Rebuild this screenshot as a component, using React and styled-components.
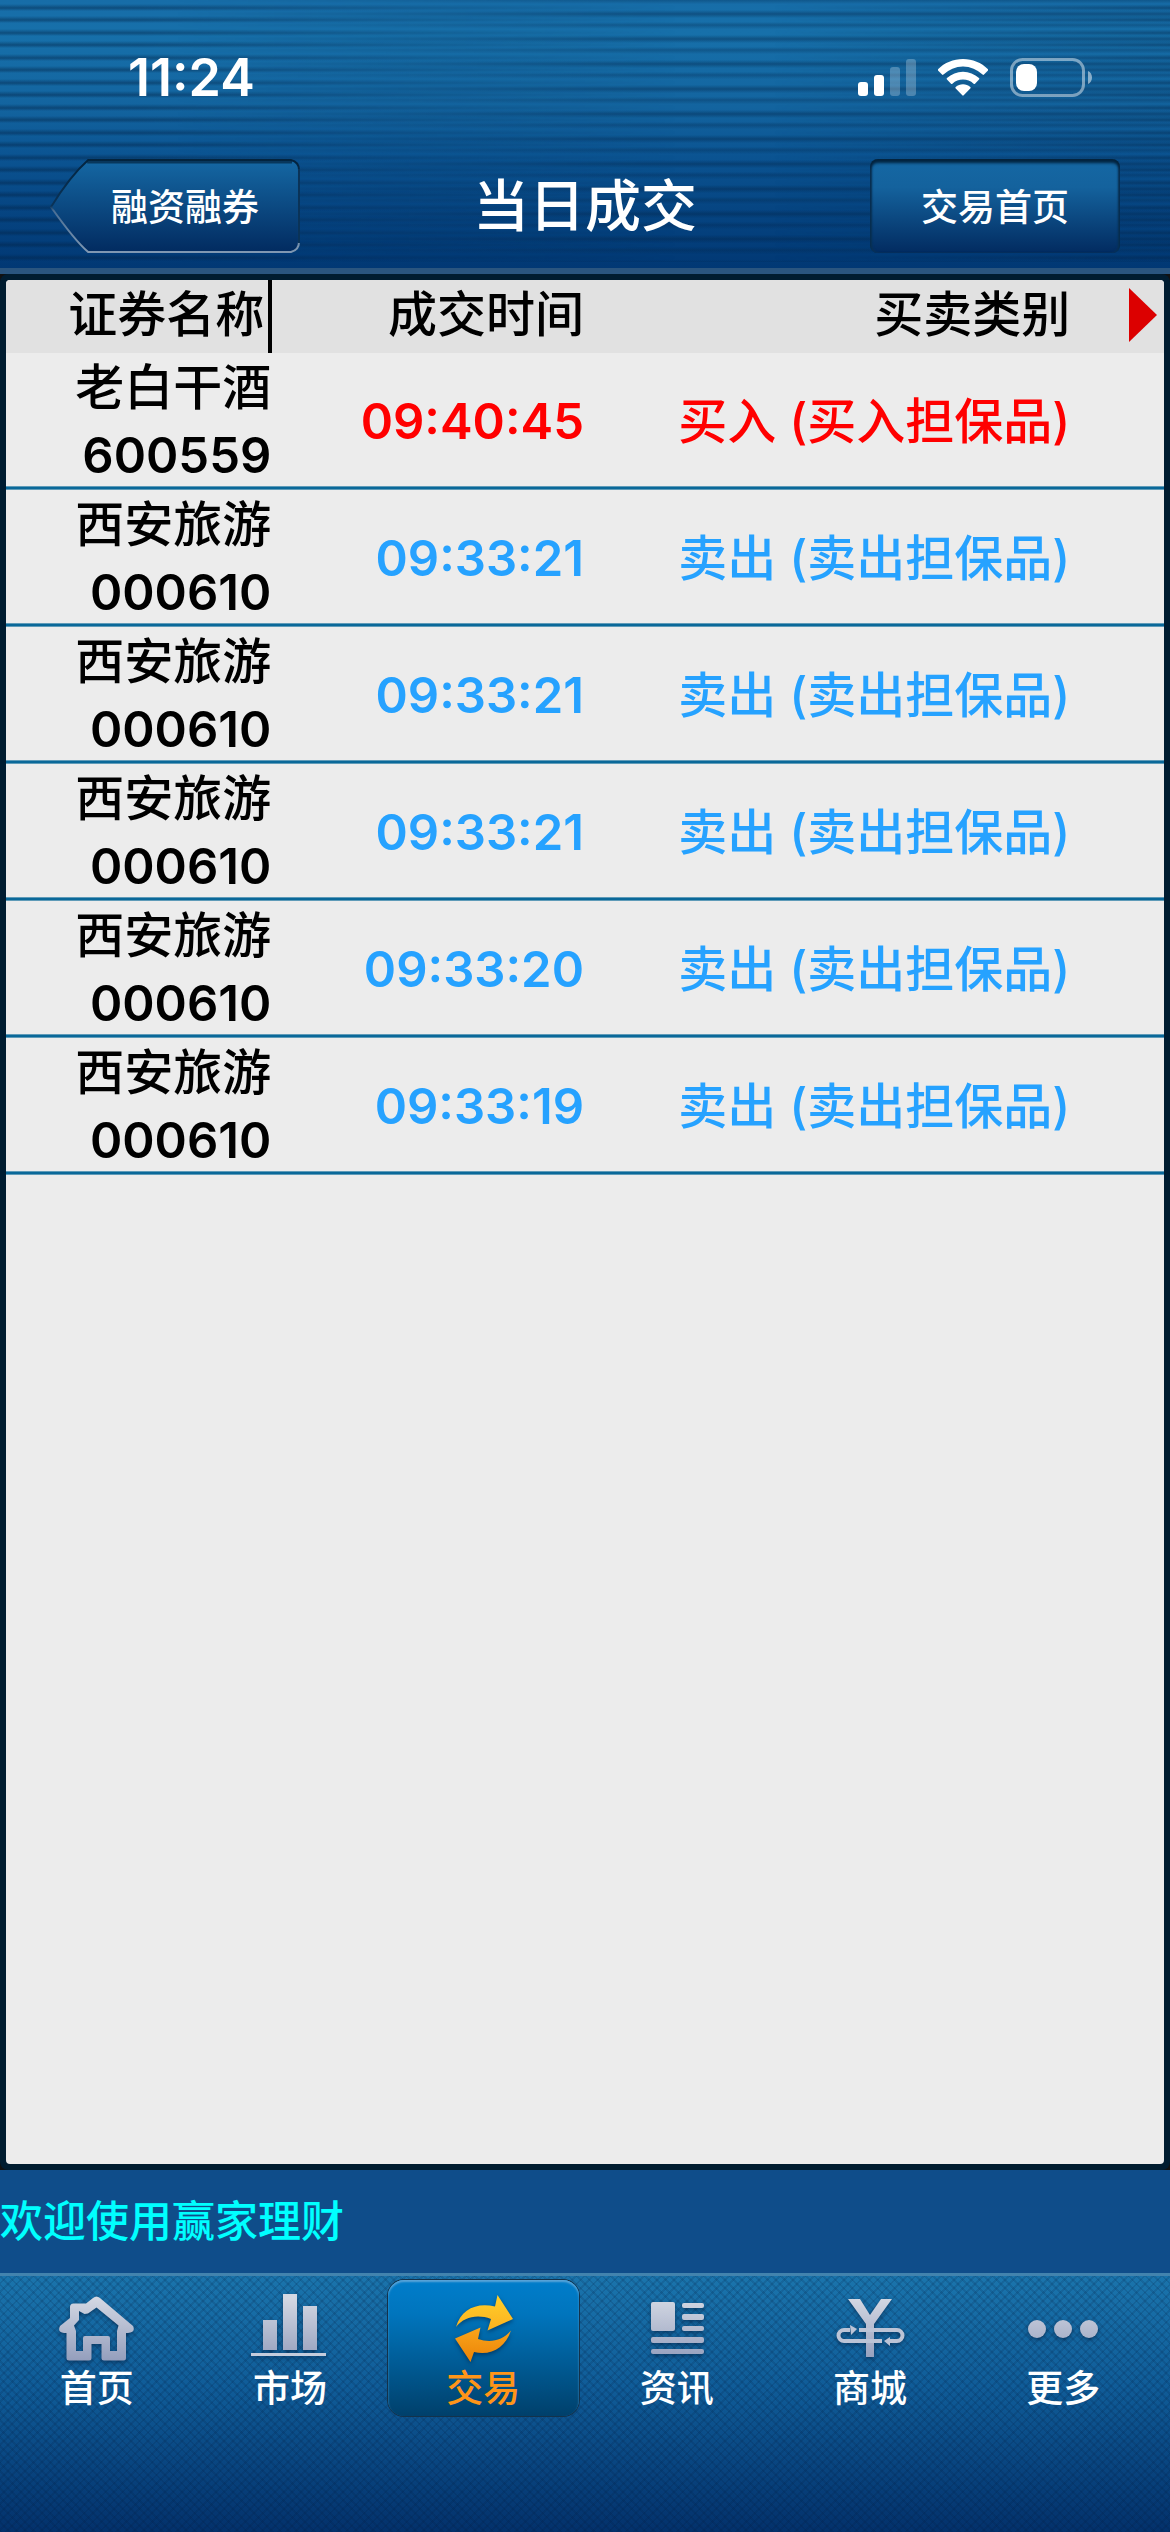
import React from "react";
import styled, { createGlobalStyle, css } from "styled-components";

const trades = [
  { name: "老白干酒", code: "600559", time: "09:40:45", kind: "买入 (买入担保品)", side: "buy" },
  { name: "西安旅游", code: "000610", time: "09:33:21", kind: "卖出 (卖出担保品)", side: "sell" },
  { name: "西安旅游", code: "000610", time: "09:33:21", kind: "卖出 (卖出担保品)", side: "sell" },
  { name: "西安旅游", code: "000610", time: "09:33:21", kind: "卖出 (卖出担保品)", side: "sell" },
  { name: "西安旅游", code: "000610", time: "09:33:20", kind: "卖出 (卖出担保品)", side: "sell" },
  { name: "西安旅游", code: "000610", time: "09:33:19", kind: "卖出 (卖出担保品)", side: "sell" },
];

const SignalIcon = () => (
  <svg width="58" height="38" viewBox="0 0 58 38" fill="#fff">
    <rect x="0" y="23" width="10" height="14" rx="3" />
    <rect x="16" y="16" width="10" height="21" rx="3" />
    <rect x="32" y="8" width="10" height="29" rx="3" opacity="0.25" />
    <rect x="48" y="0" width="10" height="37" rx="3" opacity="0.25" />
  </svg>
);

const WifiIcon = () => (
  <svg width="50" height="38" viewBox="0 0 50 38" fill="#fff">
    <path d="M25 0C34.500 0 43.500 3.700 50 10.200a1 1 0 0 1 0 1.400l-4 4a1 1 0 0 1-1.400 0a28 28 0 0 0-39.200 0a1 1 0 0 1-1.400 0l-4-4a1 1 0 0 1 0-1.400C6.500 3.700 15.500 0 25 0z" />
    <path d="M25 12.700c6 0 11.600 2.300 16 6.300a1 1 0 0 1 0 1.500l-4 4.200a1 1 0 0 1-1.400 0a15.500 15.500 0 0 0-21.200 0a1 1 0 0 1-1.400 0l-4-4.200a1 1 0 0 1 0-1.500c4.400-4 10-6.300 16-6.300z" />
    <path d="M25 25.300c2.700 0 5.200.9 7.300 2.600a1 1 0 0 1 0 1.500l-6.600 6.900a1 1 0 0 1-1.400 0l-6.600-6.900a1 1 0 0 1 0-1.500c2.100-1.700 4.600-2.600 7.300-2.600z" />
  </svg>
);

const BatteryIcon = () => (
  <svg width="82" height="39" viewBox="0 0 82 39" fill="none">
    <rect x="1.500" y="1.500" width="72" height="36" rx="11" stroke="#fff" strokeOpacity="0.45" strokeWidth="3" />
    <path d="M78 13c2.500 1.200 4 3.500 4 6.500s-1.500 5.300-4 6.500z" fill="#fff" fillOpacity="0.5" />
    <rect x="6" y="6" width="21" height="27" rx="8" fill="#fff" />
  </svg>
);

const Metal = () => (
  <defs>
    <linearGradient id="metal" gradientUnits="userSpaceOnUse" x1="0" y1="4" x2="0" y2="66">
      <stop offset="0" stopColor="#d3d8e3" />
      <stop offset="1" stopColor="#959fbd" />
    </linearGradient>
  </defs>
);

const HomeIcon = () => (
  <svg width="80" height="70" viewBox="0 0 80 70">
    <Metal />
    <path
      d="M36 4Q39.500 1 43 4L76 32Q79 38 71 39H69V64Q69 66.500 66.500 66.500H47Q44.500 66.500 44.500 64V50H34.500V64Q34.500 66.500 32 66.500H12Q9.500 66.500 9.500 64V39H7Q0 38 3 32L13 24V13Q13 9.500 16.500 9.500H29zM39.500 13.500L31 19.500L27.500 20L22 17V26L17 31.500L19 37V57H26V44Q26 42 28 42H51Q53 42 53 44V57H60V37L61.500 31.500z"
      fill="url(#metal)"
      fillRule="evenodd"
    />
  </svg>
);

const MarketIcon = () => (
  <svg width="80" height="70" viewBox="0 0 80 70" fill="url(#metal)">
    <rect x="13" y="26" width="14" height="30" />
    <rect x="33" y="0" width="14" height="56" />
    <rect x="53" y="12" width="14" height="44" />
    <rect x="1" y="59" width="75" height="3" fill="#c5ccdc" />
  </svg>
);

const TradeIcon = () => (
  <svg width="80" height="70" viewBox="0 0 80 70">
    <defs>
      <linearGradient id="gold" x1="0" y1="0" x2="0" y2="1">
        <stop offset="0" stopColor="#ffd02b" />
        <stop offset="1" stopColor="#fbb11f" />
      </linearGradient>
      <linearGradient id="orange" x1="0" y1="0" x2="0" y2="1">
        <stop offset="0" stopColor="#f9a51b" />
        <stop offset="1" stopColor="#ec8307" />
      </linearGradient>
    </defs>
    <path d="M13 33C18 15 34 8 52 12.500L54.500 1L70 25L44.500 36.500L48 25C34 20 21 23 13 33z" fill="url(#gold)" />
    <path d="M68 36.500C62 54 48 62 31 58L27.500 68L12 44.500L37.500 33.500L35 45C47 49 59 47 68 36.500z" fill="url(#orange)" />
  </svg>
);

const NewsIcon = () => (
  <svg width="80" height="70" viewBox="0 0 80 70" fill="url(#metal)">
    <rect x="14" y="8" width="24" height="29" rx="2" />
    <rect x="45" y="9" width="22" height="5" rx="2" />
    <rect x="45" y="20" width="22" height="6" rx="2" />
    <rect x="45" y="32" width="22" height="5" rx="2" />
    <rect x="14" y="43" width="53" height="6" rx="2" />
    <rect x="14" y="55" width="53" height="5" rx="2" />
  </svg>
);

const MallIcon = () => (
  <svg width="80" height="70" viewBox="0 0 80 70">
    <path d="M18 5H30L40 21L51 5H62L44 30V63H36V30z" fill="url(#metal)" />
    <path d="M20 36H14a5.500 5.500 0 0 0 0 11H52M29 36H67a5.500 5.500 0 0 1 0 11H60" fill="none" stroke="#bcc4d6" strokeWidth="4" />
    <path d="M20 31l7 4-6 6zM60 43l-6 4 6 5z" fill="#bcc4d6" />
  </svg>
);

const MoreIcon = () => (
  <svg width="80" height="70" viewBox="0 0 80 70" fill="url(#metal)">
    <circle cx="14" cy="35" r="9" />
    <circle cx="40" cy="35" r="9" />
    <circle cx="66" cy="35" r="9" />
  </svg>
);

const tabs = [
  { label: "首页", Icon: HomeIcon },
  { label: "市场", Icon: MarketIcon },
  { label: "交易", Icon: TradeIcon, active: true },
  { label: "资讯", Icon: NewsIcon },
  { label: "商城", Icon: MallIcon },
  { label: "更多", Icon: MoreIcon },
];

const App = () => {
  return (
    <Screen>
      <GlobalStyle />
      <Header>
        <StatusBar>
          <Clock>11:24</Clock>
          <StatusIcons>
            <SignalIcon />
            <WifiIcon />
            <BatteryIcon />
          </StatusIcons>
        </StatusBar>
        <NavBar>
          <BackButton>
            <BackShape />
            <span>融资融券</span>
          </BackButton>
          <Title>当日成交</Title>
          <NavButton>交易首页</NavButton>
        </NavBar>
      </Header>
      <Frame>
        <Panel>
          <Table>
            <thead>
              <tr>
                <NameHead>证券名称</NameHead>
                <TimeHead>成交时间</TimeHead>
                <KindHead>买卖类别</KindHead>
                <ArrowHead>
                  <ScrollButton aria-label="更多">
                    <svg width="30" height="56" viewBox="0 0 30 56">
                      <path d="M1 1L29 28L1 55z" fill="#dc0000" />
                    </svg>
                  </ScrollButton>
                </ArrowHead>
              </tr>
            </thead>
            <tbody>
              {trades.map((trade, i) => (
                <tr key={i}>
                  <Cell>
                    <div>{trade.name}</div>
                    <Digits>{trade.code}</Digits>
                  </Cell>
                  <Cell $side={trade.side}>
                    <Digits>{trade.time}</Digits>
                  </Cell>
                  <Cell $side={trade.side}>{trade.kind}</Cell>
                  <Cell />
                </tr>
              ))}
            </tbody>
          </Table>
        </Panel>
      </Frame>
      <Notice>欢迎使用赢家理财</Notice>
      <TabBar>
        {tabs.map(({ label, Icon, active }) => (
          <Tab key={label} href="#" $active={active}>
            <Icon />
            <TabLabel>{label}</TabLabel>
          </Tab>
        ))}
      </TabBar>
    </Screen>
  );
};

const BackShape = () => (
  <BackSvg viewBox="0 0 249 94" preserveAspectRatio="none">
    <defs>
      <linearGradient id="backFill" x1="0" y1="0" x2="0" y2="1">
        <stop offset="0" stopColor="#1568a4" />
        <stop offset="1" stopColor="#022b60" />
      </linearGradient>
      <linearGradient id="backEdge" x1="0" y1="0" x2="0" y2="1">
        <stop offset="0" stopColor="#03243f" />
        <stop offset="0.5" stopColor="#0a3358" />
        <stop offset="0.55" stopColor="#4a6e94" />
        <stop offset="1" stopColor="#8098b2" />
      </linearGradient>
    </defs>
    <path
      d="M38 1H240Q248 3 248 11V83Q248 91 240 93H38Q25 82 1 48Q20 17 38 1z"
      fill="url(#backFill)"
      stroke="url(#backEdge)"
      strokeWidth="2"
    />
    <path d="M248 10V84" stroke="#0a3358" strokeWidth="2" />
    <path d="M37 3H241" stroke="#03243f" strokeWidth="3" opacity="0.7" />
  </BackSvg>
);

export default App;

const GlobalStyle = createGlobalStyle`
  body {
    margin: 0;
    background: #111;
    font-family: Inter, "Noto Sans CJK SC", sans-serif;
    font-weight: 500;
  }
`;

const Screen = styled.div`
  display: flex;
  flex-direction: column;
  min-height: 100vh;
`;

const stripes = css`
  content: "";
  position: absolute;
  inset: 0 0 6px;
`;

const Header = styled.header`
  position: relative;
  box-sizing: border-box;
  height: 274px;
  border-bottom: 6px solid #2a557f;
  background: linear-gradient(#176da8 0%, #1770aa 12%, #13649f 40%, #0b5492 58%, #064582 78%, #013874 100%);
  color: #fff;

  /* two sets of scan lines, half a step apart, that cross-fade along the bar */
  &::before {
    ${stripes}
    background: repeating-linear-gradient(
      transparent 0 4px,
      rgba(3, 35, 70, 0.45) 8px,
      transparent 11px 16px,
      rgba(3, 35, 70, 0.45) 20px,
      transparent 23px 25px
    );
    mask-image: linear-gradient(90deg, #000 12%, transparent 58%, transparent 66%, #000 100%);
  }

  &::after {
    ${stripes}
    background: repeating-linear-gradient(
      rgba(3, 35, 70, 0.3) 0,
      transparent 4px 10px,
      rgba(3, 35, 70, 0.4) 14px,
      transparent 18px 22px,
      rgba(3, 35, 70, 0.3) 25px
    );
    mask-image: linear-gradient(90deg, transparent 15%, #000 55%);
  }

  > * {
    position: relative;
    z-index: 1;
  }
`;

const StatusBar = styled.div`
  display: flex;
  justify-content: space-between;
  align-items: center;
  box-sizing: border-box;
  height: 159px;
  padding: 0 78px 4px 128px;
`;

const Clock = styled.span`
  font-size: 52px;
  font-weight: 600;
  line-height: 60px;
`;

const StatusIcons = styled.div`
  display: flex;
  align-items: center;
  gap: 22px;
`;

const NavBar = styled.div`
  display: grid;
  grid-template-columns: 250px 1fr 250px;
  align-items: center;
  padding: 0 50px;
`;

const button = css`
  height: 94px;
  padding: 0 0 2px;
  border: 0;
  color: #fff;
  font: inherit;
  font-size: 37px;
`;

const BackButton = styled.button`
  ${button}
  position: relative;
  background: none;

  span {
    position: relative;
    padding-left: 20px;
  }
`;

const BackSvg = styled.svg`
  position: absolute;
  inset: 0;
  width: 100%;
  height: 100%;
`;

const NavButton = styled.button`
  ${button}
  border-radius: 8px;
  background: linear-gradient(#1568a4, #14629d 30%, #022b60);
  box-shadow: inset 0 4px 3px #03243f, inset 2px 0 2px #0a3358, inset -2px 0 2px #0a3358;
`;

const Title = styled.h1`
  margin: 0;
  font-size: 56px;
  font-weight: 500;
  line-height: 80px;
  text-align: center;
`;

const Frame = styled.main`
  display: flex;
  flex: 1;
  padding: 6px;
  border-radius: 8px;
  background: #001c30;
`;

const Panel = styled.div`
  flex: 1;
  overflow: hidden;
  border-radius: 4px;
  background: #ececec;
`;

const Table = styled.table`
  width: 100%;
  border-collapse: separate;
  border-spacing: 0;
  table-layout: fixed;
  color: #000;
  font-size: 49px;
  line-height: 68px;
  text-align: right;
`;

const HeadCell = styled.th`
  box-sizing: border-box;
  height: 73px;
  padding: 0 1px 3px 0;
  background: #e1e1e1;
  font-weight: 500;
`;

const NameHead = styled(HeadCell)`
  width: 23%;
  padding-right: 4px;
  border-right: 4px solid #000;
`;

const TimeHead = styled(HeadCell)`
  width: 27%;
`;

const KindHead = styled(HeadCell)`
  width: 42%;
`;

const ArrowHead = styled(HeadCell)`
  padding-right: 6px;
`;

const ScrollButton = styled.button`
  display: block;
  margin-left: auto;
  padding: 0;
  border: 0;
  background: none;

  svg {
    display: block;
  }
`;

const colors = {
  buy: "#ff0000",
  sell: "#26a2ff",
};

const Cell = styled.td`
  box-sizing: border-box;
  height: 137px;
  padding: 0 1px 0 0;
  box-shadow: inset 0 -1px #5f9bb8, inset 0 -3px #0a6899, inset 0 -4px #5f9bb8;
  color: ${({ $side }) => colors[$side] || "#000"};
  white-space: nowrap;
`;

const Digits = styled.div`
  font-weight: 600;
`;

const Notice = styled.p`
  margin: 0;
  padding: 19px 0;
  background: #0f4d8a;
  color: #00ffff;
  font-size: 43px;
  line-height: 65px;
`;

const TabBar = styled.nav`
  box-sizing: border-box;
  display: grid;
  grid-template-columns: repeat(6, 1fr);
  align-items: start;
  height: 259px;
  padding: 4px 10px 0 0;
  border-top: 3px solid #4283ae;
  background:
    repeating-linear-gradient(45deg, rgba(0, 25, 60, 0.14) 0 2px, transparent 2px 6px),
    repeating-linear-gradient(-45deg, rgba(0, 25, 60, 0.14) 0 2px, transparent 2px 6px),
    linear-gradient(#1a74ac, #0f5b97 45%, #03316b);
`;

const Tab = styled.a`
  display: flex;
  flex-direction: column;
  align-items: center;
  box-sizing: border-box;
  height: 136px;
  margin: 0 1px;
  padding-top: 14px;
  border-radius: 16px;
  color: ${({ $active }) => ($active ? "#ff9518" : "#fff")};
  text-decoration: none;

  svg {
    filter: drop-shadow(0 2px 2px rgba(0, 20, 50, 0.5));
  }

  ${({ $active }) =>
    $active &&
    css`
      background: linear-gradient(#007dcb, #0075bd 25%, #00406b);
      box-shadow: inset 0 2px 2px #5aa5d8, 0 0 0 1px #14324a;
    `}
`;

const TabLabel = styled.span`
  margin-top: 2px;
  font-size: 37px;
  line-height: 46px;
`;
